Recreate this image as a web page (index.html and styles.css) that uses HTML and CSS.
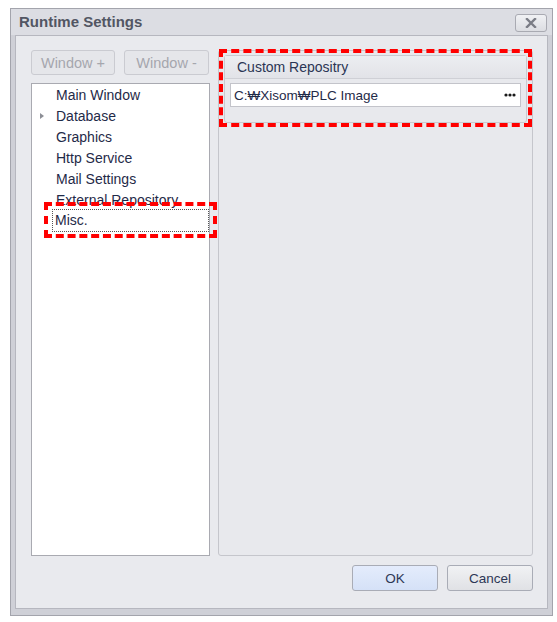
FILE: index.html
```html
<!DOCTYPE html>
<html>
<head>
<meta charset="utf-8">
<title>Runtime Settings</title>
<link rel="stylesheet" href="styles.css">
</head>
<body>
<div class="window">
  <div class="titlebar">
    <span class="title">Runtime Settings</span>
    <button class="close" aria-label="Close">
      <svg width="12" height="10" viewBox="0 0 12 10"><path d="M2 1 L10 9 M10 1 L2 9" stroke="#7b7d86" stroke-width="2.4" stroke-linecap="square"/></svg>
    </button>
  </div>
  <div class="content">
    <div class="main">
      <div class="left">
        <div class="toolrow">
          <button class="tbtn wplus">Window +</button>
          <button class="tbtn wminus">Window -</button>
        </div>
        <ul class="tree">
          <li class="node">Main Window</li>
          <li class="node"><span class="arrow"></span>Database</li>
          <li class="node">Graphics</li>
          <li class="node">Http Service</li>
          <li class="node">Mail Settings</li>
          <li class="node">External Repository</li>
          <li class="node selected"><span class="sel">Misc.</span></li>
        </ul>
      </div>
      <div class="right">
        <div class="group">
          <div class="ghead">Custom Repositry</div>
          <div class="gbody">
            <div class="field">
              <span class="path">C:₩Xisom₩PLC Image</span>
              <svg class="dots" width="12" height="4" viewBox="0 0 12 4"><circle cx="2" cy="2" r="1.6" fill="#1a1a1a"/><circle cx="6" cy="2" r="1.6" fill="#1a1a1a"/><circle cx="10" cy="2" r="1.6" fill="#1a1a1a"/></svg>
            </div>
          </div>
        </div>
      </div>
    </div>
    <div class="footer">
      <button class="dbtn ok">OK</button>
      <button class="dbtn cancel">Cancel</button>
    </div>
  </div>
</div>
<div class="mark mark1"></div>
<div class="mark mark2"></div>
</body>
</html>
```
FILE: styles.css
```css
html, body {
  margin: 0;
  padding: 0;
  background: #ffffff;
}
body {
  font-family: "Liberation Sans", Arial, sans-serif;
  font-size: 13px;
  color: #1f2a48;
  position: relative;
  width: 557px;
  height: 622px;
  overflow: hidden;
}
.window {
  box-sizing: border-box;
  margin: 8px 0 0 10px;
  width: 543px;
  height: 608px;
  border: 1px solid #a3a4ac;
  background: #cfd0d7;
  padding: 0 4px 6px 4px;
  display: flex;
  flex-direction: column;
}
.titlebar {
  height: 26px;
  display: flex;
  align-items: center;
  justify-content: space-between;
  background: #dcdde3;
  margin: 0 -4px;
  padding: 0 5px 0 8px;
}
.title {
  font-weight: bold;
  font-size: 15px;
  color: #525663;
  margin-top: -1px;
}
.close {
  width: 32px;
  height: 18px;
  margin-top: 2px;
  border: 1px solid #a9aab2;
  border-radius: 3px;
  background: linear-gradient(#f0f1f4, #dcdde2);
  display: flex;
  align-items: center;
  justify-content: center;
  padding: 0;
}
.content {
  flex: 1;
  border: 1px solid #b6b7bf;
  background: #e9eaee;
  padding: 14px 14px 18px 15px;
  display: flex;
  flex-direction: column;
}
.main {
  height: 506px;
  display: flex;
  gap: 8px;
}
.left {
  width: 179px;
  display: flex;
  flex-direction: column;
  gap: 8px;
}
.toolrow {
  display: flex;
  gap: 9px;
  height: 25px;
}
.tbtn {
  box-sizing: border-box;
  height: 25px;
  border: 1px solid #cacbd1;
  border-radius: 3px;
  background: #e5e6ea;
  color: #a5a7ae;
  font-family: "Liberation Sans", Arial, sans-serif;
  font-size: 14.5px;
  padding: 0;
}
.wplus { width: 84px; }
.wminus { width: 85px; }
.tree {
  flex: 1;
  margin: 0;
  padding: 1px 0 0 0;
  list-style: none;
  background: #ffffff;
  border: 1px solid #a9aab1;
  font-size: 14px;
}
.node {
  height: 21px;
  line-height: 21px;
  padding-left: 24px;
  position: relative;
  white-space: nowrap;
}
.arrow {
  position: absolute;
  left: 8px;
  top: 7px;
  width: 0;
  height: 0;
  border-top: 3.5px solid transparent;
  border-bottom: 3.5px solid transparent;
  border-left: 4px solid #8c8e96;
}
.node.selected {
  padding-left: 20px;
}
.sel {
  display: block;
  height: 23px;
  line-height: 23px;
  padding-left: 3px;
  outline: 1px dotted #555;
  outline-offset: -1px;
  margin-top: -2px;
}
.right {
  width: 315px;
  box-sizing: border-box;
  border: 1px solid #c5c6cc;
  border-radius: 3px;
  background: #e8e9ed;
  padding: 4px 5px 0 5px;
}
.group {
  width: 303px;
  box-sizing: border-box;
  border: 1px solid #c9cad0;
  border-radius: 3px;
  background: #e8e9ed;
}
.ghead {
  height: 22px;
  line-height: 22px;
  padding-left: 12px;
  background: linear-gradient(#eceef1, #e2e3e8);
  border-bottom: 1px solid #cfd0d6;
  color: #2b3554;
  font-size: 14px;
}
.gbody {
  padding: 4px 5px 15px 5px;
}
.field {
  box-sizing: border-box;
  height: 24px;
  background: #ffffff;
  border: 1px solid #c3c4ca;
  display: flex;
  align-items: center;
  justify-content: space-between;
  padding: 0 4px 0 3px;
  color: #1f2a48;
  font-size: 13.5px;
}
.dots {
  display: block;
}
.footer {
  margin-top: 9px;
  height: 25px;
  display: flex;
  justify-content: flex-end;
  gap: 9px;
}
.dbtn {
  box-sizing: border-box;
  width: 86px;
  height: 26px;
  border: 1px solid #a9acb6;
  border-radius: 3px;
  font-family: "Liberation Sans", Arial, sans-serif;
  font-size: 13.5px;
  color: #2d3756;
  padding: 0;
}
.ok {
  background: linear-gradient(#e4ecfc, #d5e1f7);
}
.cancel {
  background: linear-gradient(#f1f2f4, #e0e1e5);
}
.mark {
  position: absolute;
  box-sizing: border-box;
  border: 4px dashed #ff0000;
}
.mark1 {
  left: 219px;
  top: 49px;
  width: 313px;
  height: 78px;
}
.mark2 {
  left: 44px;
  top: 202px;
  width: 173px;
  height: 36px;
}
```
